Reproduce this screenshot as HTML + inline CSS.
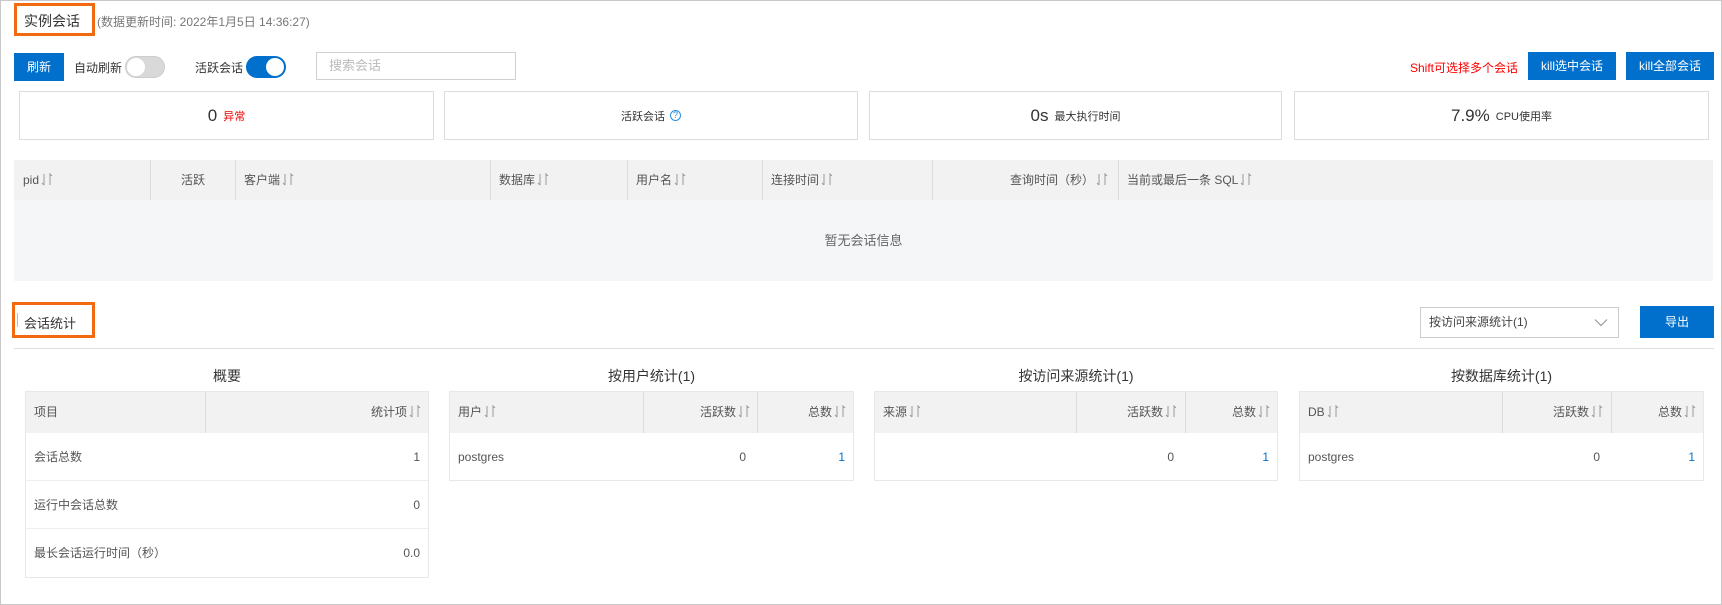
<!DOCTYPE html>
<html><head><meta charset="utf-8"><style>
*{margin:0;padding:0;box-sizing:border-box}
body{width:1722px;height:605px;position:relative;background:#fff;font-family:"Liberation Sans","Noto Sans CJK SC",sans-serif;font-size:12px;color:#333;overflow:hidden}
.a{position:absolute}
.frame{left:0;top:0;width:1722px;height:605px;border:1px solid #c8c8c8}
.obox{border:3px solid #f26a10}
.btn{background:#0070cc;color:#fff;text-align:center;font-size:12px}
.card{border:1px solid #dcdcdc;top:91px;height:49px;display:flex;align-items:center;justify-content:center;font-size:11px;color:#333}
.card b{font-weight:normal;font-size:17px;color:#333;margin-right:6px}
.s{display:inline-block;width:12px;height:13px;margin-left:2px;margin-right:3px;vertical-align:-2px;background:none}
.th{background:#f2f2f2}
.vl{position:absolute;top:0;bottom:0;width:1px;background:#ddd}
.cell{position:absolute;line-height:40px;font-size:12px;color:#555;white-space:nowrap}
</style></head><body>
<svg width="0" height="0" style="position:absolute"><symbol id="srt" viewBox="0 0 12 13"><path d="M3 1 V12 M1 10 L3 12 M9 12 V1 L11 3" fill="none" stroke="#999" stroke-width="1"/></symbol></svg>
<div class="a frame"></div>

<div class="a obox" style="left:14px;top:3px;width:81px;height:33px"></div>
<div class="a" style="left:24px;top:11px;font-size:14px;color:#333">实例会话</div>
<div class="a" style="left:97px;top:13px;font-size:12px;color:#777">(数据更新时间: 2022年1月5日 14:36:27)</div>

<div class="a btn" style="left:14px;top:53px;width:50px;height:28px;line-height:28px">刷新</div>
<div class="a" style="left:74px;top:59px">自动刷新</div>
<div class="a" style="left:125px;top:56px;width:40px;height:22px;border-radius:11px;background:#d9d9d9;border:1px solid #ccc"><div style="position:absolute;left:1px;top:1px;width:18px;height:18px;border-radius:50%;background:#fff"></div></div>
<div class="a" style="left:195px;top:59px">活跃会话</div>
<div class="a" style="left:246px;top:56px;width:40px;height:22px;border-radius:11px;background:#0070cc"><div style="position:absolute;right:2px;top:2px;width:18px;height:18px;border-radius:50%;background:#fff"></div></div>
<div class="a" style="left:316px;top:52px;width:200px;height:28px;border:1px solid #d0d0d0;color:#bbb;font-size:13px;line-height:26px;padding-left:12px">搜索会话</div>

<div class="a" style="left:1410px;top:59px;color:#f00">Shift可选择多个会话</div>
<div class="a btn" style="left:1528px;top:52px;width:88px;height:28px;line-height:28px">kill选中会话</div>
<div class="a btn" style="left:1626px;top:52px;width:88px;height:28px;line-height:28px">kill全部会话</div>

<div class="a card" style="left:19px;width:415px"><b>0</b><span style="color:#e00">异常</span></div>
<div class="a card" style="left:444px;width:414px">活跃会话<span style="display:inline-block;width:11px;height:11px;border:1px solid #2a8fdd;border-radius:50%;color:#2a8fdd;font-size:9px;line-height:9px;text-align:center;margin-left:5px">?</span></div>
<div class="a card" style="left:869px;width:413px"><b>0s</b>最大执行时间</div>
<div class="a card" style="left:1294px;width:415px"><b>7.9%</b>CPU使用率</div>

<div class="a" style="left:14px;top:160px;width:1699px;height:121px;background:#f5f6f8">
 <div class="th" style="position:absolute;left:0;top:0;width:100%;height:40px">
  <div class="vl" style="left:136px"></div><div class="vl" style="left:221px"></div><div class="vl" style="left:476px"></div><div class="vl" style="left:613px"></div><div class="vl" style="left:748px"></div><div class="vl" style="left:918px"></div><div class="vl" style="left:1104px"></div>
  <div class="cell" style="left:9px">pid<svg class="s"><use href="#srt"/></svg></div>
  <div class="cell" style="left:167px">活跃</div>
  <div class="cell" style="left:230px">客户端<svg class="s"><use href="#srt"/></svg></div>
  <div class="cell" style="left:485px">数据库<svg class="s"><use href="#srt"/></svg></div>
  <div class="cell" style="left:622px">用户名<svg class="s"><use href="#srt"/></svg></div>
  <div class="cell" style="left:757px">连接时间<svg class="s"><use href="#srt"/></svg></div>
  <div class="cell" style="left:996px">查询时间（秒）<svg class="s"><use href="#srt"/></svg></div>
  <div class="cell" style="left:1113px">当前或最后一条 SQL<svg class="s"><use href="#srt"/></svg></div>
 </div>
 <div class="a" style="left:0;width:100%;top:70px;text-align:center;font-size:13px;color:#666">暂无会话信息</div>
</div>

<div class="a obox" style="left:12px;top:302px;width:83px;height:36px"></div>
<div class="a" style="left:17px;top:313px;width:1px;height:14px;background:#bbb"></div>
<div class="a" style="left:24px;top:313px;font-size:13px">会话统计</div>
<div class="a" style="left:1420px;top:307px;width:199px;height:31px;border:1px solid #ccc;line-height:29px;padding-left:8px;color:#444">按访问来源统计(1)<svg style="position:absolute;right:10px;top:10px" width="14" height="9" viewBox="0 0 14 9"><path d="M1 1.5 L7 7.5 L13 1.5" fill="none" stroke="#999" stroke-width="1.2"/></svg></div>
<div class="a btn" style="left:1640px;top:306px;width:74px;height:32px;line-height:32px">导出</div>
<div class="a" style="left:14px;top:348px;width:1700px;height:1px;background:#ddd"></div>

<div class="a" style="left:25px;top:366px;width:404px;text-align:center;font-size:14px;color:#333">概要</div>
<div class="a" style="left:449px;top:366px;width:405px;text-align:center;font-size:14px;color:#333">按用户统计(1)</div>
<div class="a" style="left:874px;top:366px;width:404px;text-align:center;font-size:14px;color:#333">按访问来源统计(1)</div>
<div class="a" style="left:1299px;top:366px;width:405px;text-align:center;font-size:14px;color:#333">按数据库统计(1)</div>

<div class="a" style="left:25px;top:391px;width:404px;height:187px;border:1px solid #e8e8e8">
 <div class="th" style="position:absolute;left:0;top:0;right:0;height:41px"><div class="vl" style="left:179px"></div>
  <div class="cell" style="left:8px">项目</div><div class="cell" style="right:4px">统计项<svg class="s"><use href="#srt"/></svg></div></div>
 <div style="position:absolute;top:41px;left:0;right:0;height:48px;border-bottom:1px solid #eee"><div class="cell" style="left:8px;line-height:48px">会话总数</div><div class="cell" style="right:8px;line-height:48px">1</div></div>
 <div style="position:absolute;top:89px;left:0;right:0;height:48px;border-bottom:1px solid #eee"><div class="cell" style="left:8px;line-height:48px">运行中会话总数</div><div class="cell" style="right:8px;line-height:48px">0</div></div>
 <div style="position:absolute;top:137px;left:0;right:0;height:48px"><div class="cell" style="left:8px;line-height:48px">最长会话运行时间（秒）</div><div class="cell" style="right:8px;line-height:48px">0.0</div></div>
</div>

<div class="a" style="left:449px;top:391px;width:405px;height:90px;border:1px solid #e8e8e8">
 <div class="th" style="position:absolute;left:0;top:0;right:0;height:41px"><div class="vl" style="left:193px"></div><div class="vl" style="left:307px"></div>
  <div class="cell" style="left:8px">用户<svg class="s"><use href="#srt"/></svg></div><div class="cell" style="right:100px">活跃数<svg class="s"><use href="#srt"/></svg></div><div class="cell" style="right:4px">总数<svg class="s"><use href="#srt"/></svg></div></div>
 <div class="cell" style="top:41px;left:8px;line-height:48px">postgres</div><div class="cell" style="top:41px;right:107px;line-height:48px">0</div><div class="cell" style="top:41px;right:8px;line-height:48px;color:#0070cc">1</div>
</div>

<div class="a" style="left:874px;top:391px;width:404px;height:90px;border:1px solid #e8e8e8">
 <div class="th" style="position:absolute;left:0;top:0;right:0;height:41px"><div class="vl" style="left:201px"></div><div class="vl" style="left:310px"></div>
  <div class="cell" style="left:8px">来源<svg class="s"><use href="#srt"/></svg></div><div class="cell" style="right:97px">活跃数<svg class="s"><use href="#srt"/></svg></div><div class="cell" style="right:4px">总数<svg class="s"><use href="#srt"/></svg></div></div>
 <div class="cell" style="top:41px;right:103px;line-height:48px">0</div><div class="cell" style="top:41px;right:8px;line-height:48px;color:#0070cc">1</div>
</div>

<div class="a" style="left:1299px;top:391px;width:405px;height:90px;border:1px solid #e8e8e8">
 <div class="th" style="position:absolute;left:0;top:0;right:0;height:41px"><div class="vl" style="left:202px"></div><div class="vl" style="left:311px"></div>
  <div class="cell" style="left:8px">DB<svg class="s"><use href="#srt"/></svg></div><div class="cell" style="right:97px">活跃数<svg class="s"><use href="#srt"/></svg></div><div class="cell" style="right:4px">总数<svg class="s"><use href="#srt"/></svg></div></div>
 <div class="cell" style="top:41px;left:8px;line-height:48px">postgres</div><div class="cell" style="top:41px;right:103px;line-height:48px">0</div><div class="cell" style="top:41px;right:8px;line-height:48px;color:#0070cc">1</div>
</div>
</body></html>
